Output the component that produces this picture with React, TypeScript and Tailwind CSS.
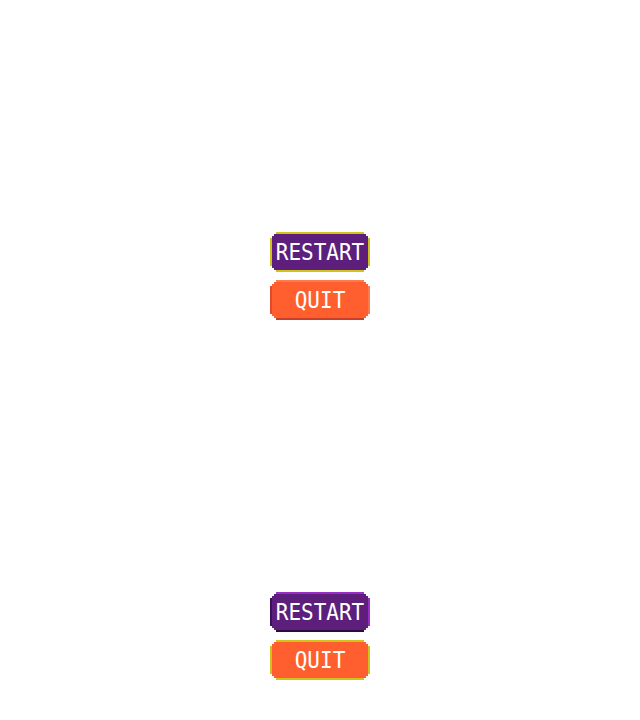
import { ReactNode } from "react";

// stepped pixel corners for the frame and the body inside it
const FRAME_CLIP =
  "[clip-path:polygon(6px_0,calc(100%-6px)_0,calc(100%-6px)_2px,calc(100%-4px)_2px,calc(100%-4px)_4px,calc(100%-2px)_4px,calc(100%-2px)_6px,100%_6px,100%_calc(100%-6px),calc(100%-2px)_calc(100%-6px),calc(100%-2px)_calc(100%-4px),calc(100%-4px)_calc(100%-4px),calc(100%-4px)_calc(100%-2px),calc(100%-6px)_calc(100%-2px),calc(100%-6px)_100%,6px_100%,6px_calc(100%-2px),4px_calc(100%-2px),4px_calc(100%-4px),2px_calc(100%-4px),2px_calc(100%-6px),0_calc(100%-6px),0_6px,2px_6px,2px_4px,4px_4px,4px_2px,6px_2px)]";

const BODY_CLIP =
  "[clip-path:polygon(2px_0,calc(100%-2px)_0,calc(100%-2px)_2px,100%_2px,100%_calc(100%-2px),calc(100%-2px)_calc(100%-2px),calc(100%-2px)_100%,2px_100%,2px_calc(100%-2px),0_calc(100%-2px),0_2px,2px_2px)]";

type Variant = "purple" | "orange";

const frameColors: Record<Variant, string> = {
  purple: "border-t-[#9a2fc7] border-r-[#9a2fc7] border-l-[#3d1057] border-b-[#2a0b3d]",
  orange: "border-t-[#ff7b4a] border-r-[#ff7b4a] border-l-[#e04b2b] border-b-[#c9402a]",
};

const bodyColors: Record<Variant, string> = {
  purple: "bg-[#5e1e7c]",
  orange: "bg-[#ff5f2e]",
};

interface PixelButtonProps {
  variant: Variant;
  selected?: boolean;
  children: ReactNode;
}

const PixelButton = ({ variant, selected = false, children }: PixelButtonProps) => {
  const frame = selected ? "border-[#d2c31c]" : frameColors[variant];
  return (
    <button className={`w-[100px] h-10 border-2 ${frame} ${FRAME_CLIP}`}>
      <div
        className={`w-full h-full flex items-center justify-center ${bodyColors[variant]} ${BODY_CLIP}`}
      >
        <span className="text-white text-[21px] leading-none scale-y-110 font-['DejaVu_Sans_Mono',monospace]">
          {children}
        </span>
      </div>
    </button>
  );
};

const Menu = ({ selected }: { selected: "restart" | "quit" }) => (
  <div className="h-[360px] flex flex-col items-center justify-end gap-2 pb-10">
    <PixelButton variant="purple" selected={selected === "restart"}>
      RESTART
    </PixelButton>
    <PixelButton variant="orange" selected={selected === "quit"}>
      QUIT
    </PixelButton>
  </div>
);

export default function App() {
  return (
    <div className="w-[640px] h-[720px] bg-white flex flex-col">
      <Menu selected="restart" />
      <Menu selected="quit" />
    </div>
  );
}
